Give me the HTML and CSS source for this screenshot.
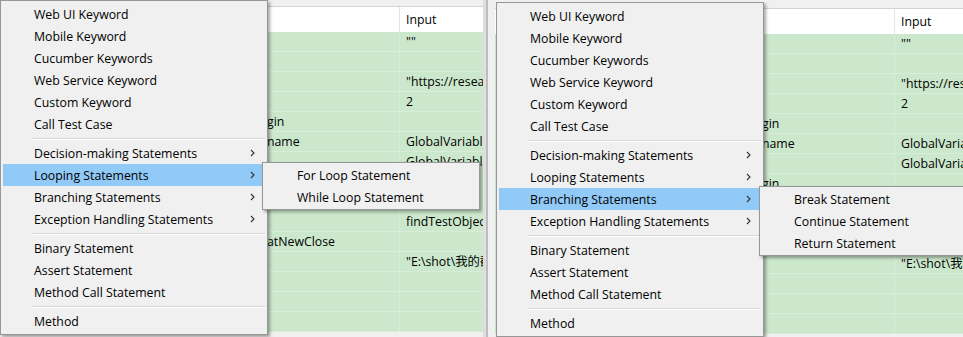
FILE: index.html
```html
<!DOCTYPE html>
<html lang="en">
<head>
<meta charset="UTF-8">
<title>Add statement menus</title>
<link rel="stylesheet" href="styles.css">
</head>
<body>
<div class="screens">
<!-- Left capture: Looping Statements open -->
<div class="pane">
<div class="grid">
<div class="head"><div class="c1"></div><div class="c2">Input</div></div>
<div class="row"><div class="c1"></div><div class="c2">""</div></div>
<div class="row"><div class="c1"></div><div class="c2"></div></div>
<div class="row"><div class="c1"></div><div class="c2">"https://research.katalon.com"</div></div>
<div class="row"><div class="c1"></div><div class="c2">2</div></div>
<div class="row"><div class="c1">gin</div><div class="c2"></div></div>
<div class="row"><div class="c1">name</div><div class="c2">GlobalVariable.name</div></div>
<div class="row"><div class="c1"></div><div class="c2">GlobalVariable.password</div></div>
<div class="row"><div class="c1">gin</div><div class="c2"></div></div>
<div class="row"><div class="c1"></div><div class="c2"></div></div>
<div class="row"><div class="c1"></div><div class="c2">findTestObject('Page')</div></div>
<div class="row"><div class="c1">atNewClose</div><div class="c2"></div></div>
<div class="row"><div class="c1"></div><div class="c2">"E:\shot\我的截图.png"</div></div>
<div class="row"><div class="c1"></div><div class="c2"></div></div>
<div class="row"><div class="c1"></div><div class="c2"></div></div>
<div class="row"><div class="c1"></div><div class="c2"></div></div>
</div>

<div class="menu">
<div class="item">Web UI Keyword</div>
<div class="item">Mobile Keyword</div>
<div class="item">Cucumber Keywords</div>
<div class="item">Web Service Keyword</div>
<div class="item">Custom Keyword</div>
<div class="item">Call Test Case</div>
<div class="sep"></div>
<div class="item sub">Decision-making Statements<svg viewBox="0 0 5 8"><polyline points="1,1 4,4 1,7"/></svg></div>
<div class="item sub active">Looping Statements<svg viewBox="0 0 5 8"><polyline points="1,1 4,4 1,7"/></svg></div>
<div class="item sub">Branching Statements<svg viewBox="0 0 5 8"><polyline points="1,1 4,4 1,7"/></svg></div>
<div class="item sub">Exception Handling Statements<svg viewBox="0 0 5 8"><polyline points="1,1 4,4 1,7"/></svg></div>
<div class="sep"></div>
<div class="item">Binary Statement</div>
<div class="item">Assert Statement</div>
<div class="item">Method Call Statement</div>
<div class="sep"></div>
<div class="item">Method</div>
</div>

<div class="submenu loop-menu">
<div class="item">For Loop Statement</div>
<div class="item">While Loop Statement</div>
</div>
</div>

<div class="splitter"></div>

<!-- Right capture: Branching Statements open -->
<div class="pane shifted">
<div class="grid">
<div class="head"><div class="c1"></div><div class="c2">Input</div></div>
<div class="row"><div class="c1"></div><div class="c2">""</div></div>
<div class="row"><div class="c1"></div><div class="c2"></div></div>
<div class="row"><div class="c1"></div><div class="c2">"https://research.katalon.com"</div></div>
<div class="row"><div class="c1"></div><div class="c2">2</div></div>
<div class="row"><div class="c1">gin</div><div class="c2"></div></div>
<div class="row"><div class="c1">name</div><div class="c2">GlobalVariable.name</div></div>
<div class="row"><div class="c1"></div><div class="c2">GlobalVariable.password</div></div>
<div class="row"><div class="c1">gin</div><div class="c2"></div></div>
<div class="row"><div class="c1"></div><div class="c2"></div></div>
<div class="row"><div class="c1"></div><div class="c2">findTestObject('Page')</div></div>
<div class="row"><div class="c1">atNewClose</div><div class="c2"></div></div>
<div class="row"><div class="c1"></div><div class="c2">"E:\shot\我的截图.png"</div></div>
<div class="row"><div class="c1"></div><div class="c2"></div></div>
<div class="row"><div class="c1"></div><div class="c2"></div></div>
<div class="row"><div class="c1"></div><div class="c2"></div></div>
</div>

<div class="menu">
<div class="item">Web UI Keyword</div>
<div class="item">Mobile Keyword</div>
<div class="item">Cucumber Keywords</div>
<div class="item">Web Service Keyword</div>
<div class="item">Custom Keyword</div>
<div class="item">Call Test Case</div>
<div class="sep"></div>
<div class="item sub">Decision-making Statements<svg viewBox="0 0 5 8"><polyline points="1,1 4,4 1,7"/></svg></div>
<div class="item sub">Looping Statements<svg viewBox="0 0 5 8"><polyline points="1,1 4,4 1,7"/></svg></div>
<div class="item sub active">Branching Statements<svg viewBox="0 0 5 8"><polyline points="1,1 4,4 1,7"/></svg></div>
<div class="item sub">Exception Handling Statements<svg viewBox="0 0 5 8"><polyline points="1,1 4,4 1,7"/></svg></div>
<div class="sep"></div>
<div class="item">Binary Statement</div>
<div class="item">Assert Statement</div>
<div class="item">Method Call Statement</div>
<div class="sep"></div>
<div class="item">Method</div>
</div>

<div class="submenu branch-menu">
<div class="item">Break Statement</div>
<div class="item">Continue Statement</div>
<div class="item">Return Statement</div>
</div>
</div>
</div>
</body>
</html>
```

FILE: styles.css
```css
body {
    margin: 0;
    padding: 0;
    font-family: "Open Sans", "Noto Sans CJK SC", sans-serif;
    font-size: 12.3px;
    color: #000;
    background: #f0f0f0;
    overflow: hidden;
}
.screens {
    display: flex;
    height: 337px;
    overflow: hidden;
}
.pane {
    position: relative;
    width: 483px;
    height: 337px;
    overflow: hidden;
    flex-shrink: 0;
}
.pane.shifted {
    flex: 1;
    margin-top: 2px;
}
/* thin window edges between the two captures */
.splitter {
    width: 12px;
    flex-shrink: 0;
    background: linear-gradient(to right, #dedede 0, #dedede 3px, #bdbdbd 3px, #bdbdbd 5px, #f0f0f0 5px);
}

/* Background table */
.grid {
    padding-top: 6px;
}
.head, .row {
    display: grid;
    grid-template-columns: 400px 1fr;
    white-space: nowrap;
}
.head {
    height: 25px;
    line-height: 26px;
    background: #fff;
    border-top: 1px solid #d4d4d4;
}
.head .c1 {
    border-right: 1px solid #e5e5e5;
}
.row {
    height: 20px;
    line-height: 20px;
    background: #cce8cc;
    border-bottom: 1px solid #d8edd8;
    box-sizing: border-box;
}
.row .c1 {
    border-right: 1px solid #d8edd8;
    padding-left: 267px;
}
.c2 {
    padding-left: 6px;
    overflow: hidden;
}

/* Popup menus */
.menu, .submenu {
    position: absolute;
    background: #f0f0f0;
    border: 1px solid #979797;
    box-shadow: 2px 2px 3px rgba(0, 0, 0, 0.35);
}
.menu {
    left: 0;
    top: 0;
    width: 262px;
    padding: 2px;
}
.shifted .menu {
    left: 1px;
}
.item {
    position: relative;
    height: 21px;
    padding-top: 1px;
    line-height: 22px;
    padding-left: 31px;
    white-space: nowrap;
}
.item.active {
    background: #91c9f7;
}
.item svg {
    position: absolute;
    right: 10px;
    top: 7px;
    width: 5px;
    height: 8px;
    fill: none;
    stroke: #333;
    stroke-width: 1.1;
}
.sep {
    height: 1px;
    margin: 3px 0 2px 29px;
    background: #d7d7d7;
    border-bottom: 1px solid #fff;
}
.submenu {
    padding: 1px;
}
.submenu .item {
    padding-left: 33px;
}
.loop-menu {
    left: 262px;
    top: 162px;
    width: 214px;
}
.branch-menu {
    left: 264px;
    top: 184px;
    width: 201px;
}
```
